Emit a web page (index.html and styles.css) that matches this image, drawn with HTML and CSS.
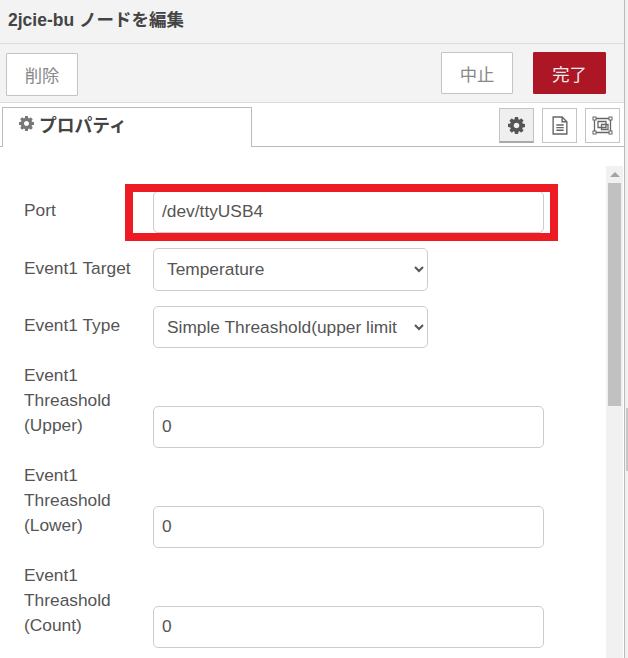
FILE: index.html
```html
<!DOCTYPE html>
<html lang="ja">
<head>
<meta charset="utf-8">
<title>2jcie-bu ノードを編集</title>
<link rel="stylesheet" href="styles.css">
</head>
<body>
<div class="page">
<div class="tray">
  <header class="title">2jcie-bu ノードを編集</header>
  <div class="toolbar">
    <button class="btn btn-delete">削除</button>
    <div class="spacer"></div>
    <button class="btn">中止</button>
    <button class="btn primary">完了</button>
  </div>
  <div class="tabbar">
    <div class="tab">
      <svg class="tab-gear" viewBox="128 128 1536 1536"><path d="M1152 896q0-106-75-181t-181-75-181 75-75 181 75 181 181 75 181-75 75-181zm512-109v222q0 12-8 23t-20 13l-185 28q-19 54-39 91 35 50 107 138 10 12 10 25t-9 23q-27 37-99 108t-94 71q-12 0-26-9l-138-108q-44 23-91 38-16 136-29 186-7 28-36 28h-222q-14 0-24.500-8.500t-11.500-21.500l-28-184q-49-16-90-37l-141 107q-10 9-25 9-14 0-25-11-126-114-165-168-7-10-7-23 0-12 8-23 15-21 51-66.500t54-70.500q-27-50-41-99l-183-27q-13-2-21-12.500t-8-23.500v-222q0-12 8-23t19-13l186-28q14-46 39-92-40-57-107-138-10-12-10-24 0-10 9-23 26-36 98.500-107.500t94.500-71.500q13 0 26 10l138 107q44-23 91-38 16-136 29-186 7-28 36-28h222q14 0 24.500 8.500t11.500 21.500l28 184q49 16 90 37l142-107q9-9 24-9 13 0 25 10 129 119 165 170 7 8 7 22 0 12-8 23-15 21-51 66.500t-54 70.500q26 50 41 98l183 28q13 2 21 12.500t8 23.500z"/></svg>
      <span>プロパティ</span>
    </div>
    <div class="tab-icons">
      <span class="icon-btn selected">
        <svg class="ico-gear" viewBox="128 128 1536 1536"><path d="M1152 896q0-106-75-181t-181-75-181 75-75 181 75 181 181 75 181-75 75-181zm512-109v222q0 12-8 23t-20 13l-185 28q-19 54-39 91 35 50 107 138 10 12 10 25t-9 23q-27 37-99 108t-94 71q-12 0-26-9l-138-108q-44 23-91 38-16 136-29 186-7 28-36 28h-222q-14 0-24.500-8.500t-11.500-21.500l-28-184q-49-16-90-37l-141 107q-10 9-25 9-14 0-25-11-126-114-165-168-7-10-7-23 0-12 8-23 15-21 51-66.500t54-70.500q-27-50-41-99l-183-27q-13-2-21-12.500t-8-23.500v-222q0-12 8-23t19-13l186-28q14-46 39-92-40-57-107-138-10-12-10-24 0-10 9-23 26-36 98.500-107.500t94.500-71.500q13 0 26 10l138 107q44-23 91-38 16-136 29-186 7-28 36-28h222q14 0 24.500 8.500t11.500 21.500l28 184q49 16 90 37l142-107q9-9 24-9 13 0 25 10 129 119 165 170 7 8 7 22 0 12-8 23-15 21-51 66.500t-54 70.500q26 50 41 98l183 28q13 2 21 12.500t8 23.500z"/></svg>
      </span>
      <span class="icon-btn">
        <svg class="ico-doc" viewBox="0 0 15 18"><path class="line" d="M1 1h8.500L14 5.500V17H1zM9.500 1v4.500H14"/><path class="line" d="M4 8.500h7M4 11h7M4 13.500h7"/></svg>
      </span>
      <span class="icon-btn">
        <svg class="ico-frame" viewBox="0 0 21 19"><path class="line" d="M2.500 2.500h16v14h-16z"/><path class="line" d="M6 5.500h8v6H6zM9.500 8.500H16v5H9.500z"/><rect class="node" x="1" y="1" width="3" height="3"/><rect class="node" x="17" y="1" width="3" height="3"/><rect class="node" x="1" y="15" width="3" height="3"/><rect class="node" x="17" y="15" width="3" height="3"/></svg>
      </span>
    </div>
  </div>
  <div class="body">
    <form class="form">
      <div class="row">
        <label class="lbl">Port</label>
        <div class="port-mark"><input class="ctl" type="text" value="/dev/ttyUSB4"></div>
      </div>
      <div class="row">
        <label class="lbl">Event1 Target</label>
        <select class="ctl sel"><option>Temperature</option></select>
      </div>
      <div class="row">
        <label class="lbl">Event1 Type</label>
        <select class="ctl sel"><option>Simple Threashold(upper limit)</option></select>
      </div>
      <div class="row">
        <label class="lbl">Event1 Threashold (Upper)</label>
        <input class="ctl" type="text" value="0">
      </div>
      <div class="row">
        <label class="lbl">Event1 Threashold (Lower)</label>
        <input class="ctl" type="text" value="0">
      </div>
      <div class="row">
        <label class="lbl">Event1 Threashold (Count)</label>
        <input class="ctl" type="text" value="0">
      </div>
    </form>
    <div class="scroll">
      <div class="scroll-btn"><i class="arrow"></i></div>
      <div class="thumb"></div>
    </div>
  </div>
</div>
<div class="outer-scroll"><div class="outer-thumb"></div></div>
</div>
</body>
</html>
```

FILE: styles.css
```css
* { box-sizing: border-box; }
html, body { margin: 0; height: 100%; overflow: hidden; background: #f1f1f1; }
body {
  font-family: "Liberation Sans", "Noto Sans CJK JP", sans-serif;
  color: #555;
  font-size: 17.33px;
}
.page { width: 628px; height: 658px; display: flex; }
.tray {
  width: 625px;
  height: 658px;
  display: flex;
  flex-direction: column;
  border-right: 1px solid #bbb;
  background: #fff;
}
.title {
  height: 44px;
  padding: 9px 8px 0;
  background: #f3f3f3;
  border-bottom: 1px solid #ddd;
  font-weight: 700;
  font-size: 17.5px;
  line-height: 22px;
  color: #444;
}
.toolbar {
  height: 59px;
  padding: 8px 18px 0 6px;
  display: flex;
  align-items: flex-start;
  gap: 20px;
  background: #f3f3f3;
  border-bottom: 1px solid #ddd;
}
.spacer { flex: 1; }
.btn {
  width: 72px;
  height: 42px;
  background: #fff;
  border: 1px solid #c4c4c4;
  border-radius: 1px;
  color: #888;
  font: 17.33px "Liberation Sans", "Noto Sans CJK JP", sans-serif;
  padding: 0;
}
.btn-delete { margin-top: 1px; height: 43px; }
.primary { width: 73px; background: #ad1625; border-color: #ad1625; color: #eee; }
.tabbar {
  height: 44px;
  padding-left: 2px;
  padding-right: 4px;
  display: flex;
  justify-content: space-between;
  align-items: flex-end;
  border-bottom: 1px solid #bbb;
}
.tab {
  width: 250px;
  height: 40px;
  margin-bottom: -1px;
  padding: 0 0 8px 16px;
  display: flex;
  align-items: center;
  gap: 5px;
  background: #fff;
  border: 1px solid #bbb;
  border-bottom: 0;
  font-weight: 700;
  font-size: 17.8px;
  color: #444;
}
.tab-gear { width: 15px; height: 15px; fill: #777; }
.tab-icons { display: flex; gap: 8px; padding-bottom: 3px; }
.icon-btn {
  width: 35px;
  height: 35px;
  display: flex;
  align-items: center;
  justify-content: center;
  border: 1px solid #c4c4c4;
  background: #fff;
}
.icon-btn.selected { background: #efefef; border-bottom: 2px solid #aaa; }
.ico-gear { width: 17px; height: 17px; fill: #555; }
.ico-doc { width: 16px; height: 19px; }
.ico-frame { width: 21px; height: 19px; }
.line { fill: none; stroke: #666; stroke-width: 1.3; }
.node { fill: #fff; stroke: #666; stroke-width: 1; }
.body { flex: 1; min-height: 0; position: relative; overflow: hidden; }
.form { padding: 43.5px 0 0 24px; display: flex; flex-direction: column; gap: 15px; }
.row { display: flex; align-items: flex-end; }
.lbl {
  width: 129px;
  font-size: 17.33px;
  line-height: 25px;
  color: #555;
  padding: 0 20px 10px 0;
}
.ctl {
  display: block;
  width: 391px;
  height: 42.5px;
  border: 1px solid #ccc;
  border-radius: 5px;
  padding: 0 8px;
  font: 17.33px "Liberation Sans", sans-serif;
  color: #555;
  background: #fff;
}
.sel { width: 275px; padding: 0 14px 0 9px; }
.port-mark { position: relative; }
.port-mark::before {
  content: "";
  box-sizing: border-box;
  position: absolute;
  left: -28px;
  top: -6.5px;
  width: 433px;
  height: 57px;
  border: 8px solid #ed1c24;
  pointer-events: none;
}
.scroll {
  position: absolute;
  right: 1px;
  top: 19px;
  bottom: 0;
  width: 17px;
  background: #f1f1f1;
}
.scroll-btn { height: 17px; display: flex; align-items: center; justify-content: center; }
.arrow { border: 5px solid transparent; border-top: 0; border-bottom: 5px solid #a3a3a3; }
.thumb { height: 223px; width: 13px; margin-left: 2px; background: #c1c1c1; }
.outer-scroll { flex: 1; padding-top: 408px; padding-left: 1px; }
.outer-thumb { height: 63px; background: #c8c8c8; }
```
